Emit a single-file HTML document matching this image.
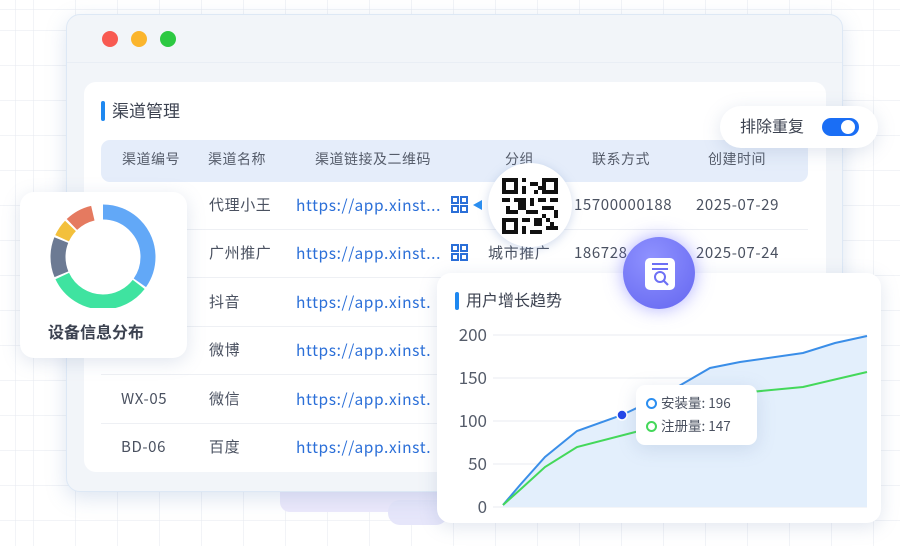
<!DOCTYPE html>
<html><head><meta charset="utf-8"><style>
*{margin:0;padding:0;box-sizing:border-box}
body{width:900px;height:546px;overflow:hidden;background:#fff;position:relative;font-family:"Noto Sans CJK SC","Liberation Sans",sans-serif;color:#4a5160;line-height:1.2}
.abs{position:absolute}
.grid{left:0;top:0;width:900px;height:546px;background-image:repeating-linear-gradient(90deg,rgba(205,212,224,.55) 0 1px,transparent 1px 42px),repeating-linear-gradient(rgba(205,212,224,.55) 0 1px,transparent 1px 35px);background-position:33px 30px;opacity:.5}
.win{left:66px;top:14px;width:777px;height:478px;background:#f2f5f9;border-radius:14px;border:1px solid #dde8f5;box-shadow:0 6px 20px rgba(120,150,200,.25)}
.dot{width:16px;height:16px;border-radius:50%;top:31px}
.inner{left:84px;top:82px;width:742px;height:390px;background:#fff;border-radius:12px}
.title{font-size:17px;color:#3c4250}
.bar{width:4px;height:20px;background:#1e88f0;border-radius:2px}
.head{left:101px;top:140px;width:707px;height:42px;background:#e5edfa;border-radius:9px}
.th{font-size:14px;color:#555c6a;top:151px;letter-spacing:.5px}
.td{font-size:15px;color:#4a5160;letter-spacing:.6px}
.link{font-size:15.5px;color:#2b6fd8;letter-spacing:.6px}
.sep{left:101px;width:707px;height:1px;background:#eef0f4}
.card{background:#fff;border-radius:14px;box-shadow:0 4px 18px rgba(120,140,180,.22)}
</style></head><body>
<div class="abs grid"></div>
<div class="abs" style="left:280px;top:480px;width:160px;height:32px;background:#ece9fb;border-radius:10px"></div>
<div class="abs" style="left:388px;top:500px;width:60px;height:25px;background:#e6e6fa;border-radius:12px"></div>
<div class="abs win"></div>
<div class="abs" style="left:67px;top:62px;width:775px;height:1px;background:#e9eef5"></div>
<div class="abs dot" style="left:102px;background:#f85a52"></div>
<div class="abs dot" style="left:131px;background:#fbb52d"></div>
<div class="abs dot" style="left:160px;background:#2dc942"></div>
<div class="abs inner"></div>
<div class="abs bar" style="left:101px;top:101px"></div>
<div class="abs title" style="left:112px;top:100px">渠道管理</div>
<div class="abs head"></div>
<div class="abs th" style="left:122px">渠道编号</div>
<div class="abs th" style="left:208px">渠道名称</div>
<div class="abs th" style="left:315px">渠道链接及二维码</div>
<div class="abs th" style="left:505px">分组</div>
<div class="abs th" style="left:592px">联系方式</div>
<div class="abs th" style="left:708px">创建时间</div>

<div class="abs sep" style="top:229px"></div>
<div class="abs sep" style="top:277px"></div>
<div class="abs sep" style="top:326px"></div>
<div class="abs sep" style="top:374px"></div>
<div class="abs sep" style="top:423px"></div>

<div class="abs td" style="left:209px;top:196px">代理小王</div>
<div class="abs td" style="left:209px;top:244px">广州推广</div>
<div class="abs td" style="left:209px;top:293px">抖音</div>
<div class="abs td" style="left:209px;top:341px">微博</div>
<div class="abs td" style="left:209px;top:390px">微信</div>
<div class="abs td" style="left:209px;top:438px">百度</div>
<div class="abs td" style="left:121px;top:390px">WX-05</div>
<div class="abs td" style="left:121px;top:438px">BD-06</div>
<div class="abs link" style="left:296px;top:196px">https://app.xinst...</div>
<div class="abs link" style="left:296px;top:244px">https://app.xinst...</div>
<div class="abs link" style="left:296px;top:293px">https://app.xinst.</div>
<div class="abs link" style="left:296px;top:341px">https://app.xinst.</div>
<div class="abs link" style="left:296px;top:390px">https://app.xinst.</div>
<div class="abs link" style="left:296px;top:438px">https://app.xinst.</div>
<svg class="abs" style="left:451px;top:196px" width="34" height="18"><g fill="none" stroke="#2b6fd8" stroke-width="2"><rect x="1" y="1" width="6" height="6"/><rect x="10" y="1" width="6" height="6"/><rect x="1" y="10" width="6" height="6"/><path d="M10 10h6v6h-6z"/></g><path d="M22 9l9-5v10z" fill="#2b8ef0"/></svg>
<svg class="abs" style="left:451px;top:244px" width="18" height="18"><g fill="none" stroke="#2b6fd8" stroke-width="2"><rect x="1" y="1" width="6" height="6"/><rect x="10" y="1" width="6" height="6"/><rect x="1" y="10" width="6" height="6"/><path d="M10 10h6v6h-6z"/></g></svg>
<div class="abs td" style="left:488px;top:244px">城市推广</div>
<div class="abs td" style="left:574px;top:196px">15700000188</div>
<div class="abs td" style="left:574px;top:244px">186728</div>
<div class="abs td" style="left:696px;top:196px">2025-07-29</div>
<div class="abs td" style="left:696px;top:244px">2025-07-24</div>

<!-- QR bubble -->
<div class="abs" style="left:488px;top:163px;width:84px;height:84px;border-radius:50%;background:#fff;box-shadow:0 2px 10px rgba(120,150,200,.35)"></div>
<svg class="abs" style="left:502px;top:178px" width="56" height="56" viewBox="0 0 14 14" shape-rendering="crispEdges">
<rect width="14" height="14" fill="#fff"/>
<g fill="#111"><path d="M0 0h4v4h-4zM10 0h4v4h-4zM0 10h4v4h-4z"/></g>
<g fill="#fff"><path d="M1 1h2v2h-2zM11 1h2v2h-2zM1 11h2v2h-2z"/></g>
<g fill="#111"><path d="M5 0h1v1h-1zM7 1h2v1h-2zM5 2h1v2h-1zM8 3h1v1h-1zM0 5h2v1h-2zM3 5h3v1h-3zM7 5h1v2h-1zM9 5h2v1h-2zM12 5h2v1h-2zM1 7h1v2h-1zM4 6h2v2h-2zM10 7h3v1h-3zM6 8h3v1h-3zM13 8h1v2h-1zM5 10h2v1h-2zM8 10h2v2h-2zM11 10h1v1h-1zM5 12h1v2h-1zM7 13h3v1h-3zM11 12h3v1h-3zM12 11h1v1h-1zM2 8h2v1h-2zM10 9h1v1h-1zM9 2h1v1h-1z"/></g>
</svg>

<!-- toggle -->
<div class="abs card" style="left:720px;top:106px;width:158px;height:42px;border-radius:21px"></div>
<div class="abs" style="left:740px;top:116px;font-size:16px;color:#3c4250">排除重复</div>
<div class="abs" style="left:822px;top:118px;width:37px;height:18px;border-radius:9px;background:#1a6ef5"></div>
<div class="abs" style="left:841px;top:120px;width:14px;height:14px;border-radius:50%;background:#fff"></div>

<!-- donut card -->
<div class="abs card" style="left:20px;top:192px;width:167px;height:166px"></div>
<svg class="abs" style="left:46px;top:204px" width="116" height="104" viewBox="0 0 116 104">
<defs><linearGradient id="gb" x1="0" y1="0" x2="0" y2="1"><stop offset="0" stop-color="#74b8fa"/><stop offset="1" stop-color="#5b96f5"/></linearGradient></defs>
<g fill="none" stroke-width="15" transform="translate(57,53) rotate(-90)">
<circle r="45" stroke="#62a8f7" stroke-dasharray="98 400" stroke-dashoffset="0"/>
<circle r="45" stroke="#3fe3a0" stroke-dasharray="92 400" stroke-dashoffset="-100"/>
<circle r="45" stroke="#6c7a93" stroke-dasharray="35 400" stroke-dashoffset="-194"/>
<circle r="45" stroke="#f3c03c" stroke-dasharray="15 400" stroke-dashoffset="-231"/>
<circle r="45" stroke="#e57a60" stroke-dasharray="24 400" stroke-dashoffset="-248"/>
</g></svg>
<div class="abs" style="left:48px;top:322px;font-size:16px;color:#3c4250;font-weight:bold">设备信息分布</div>

<!-- chart card -->
<div class="abs card" style="left:437px;top:273px;width:444px;height:250px"></div>
<div class="abs bar" style="left:455px;top:292px;height:18px"></div>
<div class="abs title" style="left:466px;top:290px;font-size:16px">用户增长趋势</div>
<svg class="abs" style="left:437px;top:273px" width="444" height="250">
<g stroke="#e8ebf0" stroke-width="1"><path d="M56 62H430M56 105H430M56 148H430M56 191H430M56 234H430"/></g>
<g font-family="Noto Sans CJK SC" font-size="17" fill="#555c6a" text-anchor="end"><text x="50" y="68">200</text><text x="50" y="111">150</text><text x="50" y="154">100</text><text x="50" y="197">50</text><text x="50" y="240">0</text></g>
<path d="M66 232L83 212L108 184L140 158L185 142L223 124L273 95L303 89L366 80L398 70L430 63V234H66Z" fill="#e3effc"/>
<path d="M66 232L83 212L108 184L140 158L185 142L223 124L273 95L303 89L366 80L398 70L430 63" fill="none" stroke="#3a8ee8" stroke-width="2"/>
<path d="M66 232L85 215L108 194L140 174L206 157L303 120L366 114L400 106L430 99" fill="none" stroke="#44d85a" stroke-width="2"/>
<circle cx="185" cy="142" r="5" fill="#2447e8" stroke="#fff" stroke-width="1.5"/>
</svg>
<div class="abs card" style="left:636px;top:385px;width:121px;height:60px;border-radius:9px"></div>
<div class="abs" style="left:646px;top:398px;width:11px;height:11px;border-radius:50%;border:2px solid #2b8ef0"></div>
<div class="abs" style="left:646px;top:421px;width:11px;height:11px;border-radius:50%;border:2px solid #44d85a"></div>
<div class="abs" style="left:661px;top:394px;font-size:13.5px;color:#4a5160">安装量: 196</div>
<div class="abs" style="left:661px;top:417px;font-size:13.5px;color:#4a5160">注册量: 147</div>

<!-- purple bubble -->
<div class="abs" style="left:623px;top:237px;width:72px;height:72px;border-radius:50%;background:radial-gradient(circle at 40% 30%,#8f92ff,#6466f0);box-shadow:0 0 18px rgba(110,110,255,.55)"></div>
<svg class="abs" style="left:643px;top:256px" width="34" height="34" viewBox="0 0 34 34">
<rect x="2" y="2" width="30" height="32" rx="5" fill="#fff"/>
<path d="M9 8h16M9 13h16" stroke="#6d70f5" stroke-width="2"/>
<circle cx="17" cy="21" r="5" fill="none" stroke="#6d70f5" stroke-width="2"/>
<path d="M21 25l4 4" stroke="#6d70f5" stroke-width="2.2"/>
</svg>
</body></html>
